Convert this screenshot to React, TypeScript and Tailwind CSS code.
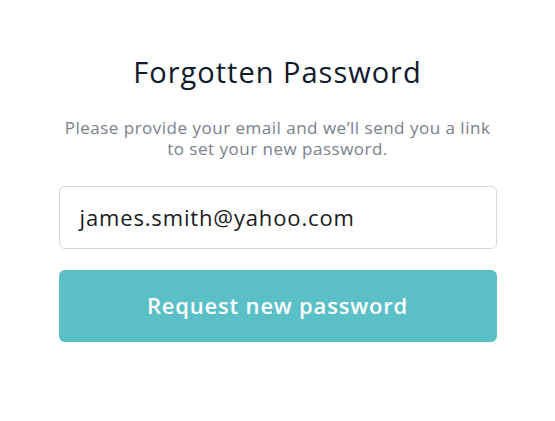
import React from "react";

export default function App() {
  return (
    <div className="w-[555px] h-[421px] bg-white flex flex-col items-center" style={{ fontFamily: "'Open Sans', Lato, sans-serif" }}>
      <h1 className="mt-[54px] text-[29px] leading-[36px] text-[#0f1a2b] font-normal tracking-[1px]">Forgotten Password</h1>
      <p className="mt-[27px] text-center text-[17px] leading-[21px] text-[#7a808c] tracking-[0.5px]">
        Please provide your email and we’ll send you a link
        <br />
        to set your new password.
      </p>
      <div className="mt-[27px] w-[438px] h-[63px] border border-[#d6d6d6] rounded-[6px] flex items-center px-[20px]">
        <span className="text-[22px] text-[#1a1a22] tracking-[0.85px]">james.smith@yahoo.com</span>
      </div>
      <button className="mt-[21px] w-[438px] h-[72px] rounded-[6px] bg-[#5bbfc7] text-white text-[22px] font-semibold tracking-[0.8px] leading-[28px] pb-[2px]">
        Request new password
      </button>
    </div>
  );
}
